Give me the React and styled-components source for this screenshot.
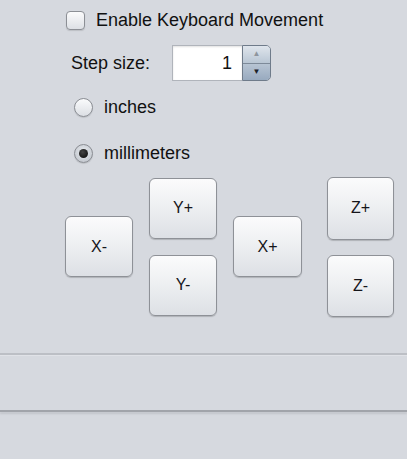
import React from 'react'
import styled, { createGlobalStyle } from 'styled-components'

const Global = createGlobalStyle`
  html, body {
    margin: 0;
    padding: 0;
    background: #d6d9df;
  }
  body {
    font-family: "Liberation Sans", Arial, sans-serif;
    font-size: 18px;
    color: #111;
  }
`

const Page = styled.div`
  width: 407px;
  height: 459px;
  display: flex;
  flex-direction: column;
  background: #d6d9df;
  overflow: hidden;
`

const Panel = styled.div`
  display: flex;
  flex-direction: column;
  padding: 10px 0 0 66px;
`

const Row = styled.label`
  display: flex;
  align-items: center;
  height: ${(p) => p.h ?? 20}px;
  margin-top: ${(p) => p.mt ?? 0}px;
  padding-left: ${(p) => p.pl ?? 0}px;
  gap: ${(p) => p.gap ?? 10}px;
  line-height: 1;
  white-space: nowrap;
`

const CheckBox = styled.span`
  width: 19px;
  height: 19px;
  box-sizing: border-box;
  border: 1px solid #8c8f95;
  border-radius: 4px;
  background: linear-gradient(#fbfbfc, #dde0e5);
  box-shadow: 0 1px 1px rgba(0, 0, 0, 0.12);
`

const Label = styled.span`
  width: ${(p) => (p.w ? p.w + 'px' : 'auto')};
  flex-shrink: 0;
`

const Spinner = styled.div`
  display: flex;
  height: 36px;
`

const Field = styled.div`
  width: 70px;
  box-sizing: border-box;
  border: 1px solid #b0b4bb;
  border-right: none;
  background: #fff;
  box-shadow: inset 0 1px 2px rgba(0, 0, 0, 0.12);
  display: flex;
  align-items: center;
  justify-content: flex-end;
  padding-right: 10px;
  font-size: 18px;
`

const Arrows = styled.div`
  width: 29px;
  display: flex;
  flex-direction: column;
  box-sizing: border-box;
  border: 1px solid #6f7b8a;
  border-radius: 0 5px 5px 0;
  overflow: hidden;
`

const ArrowBtn = styled.div`
  flex: 1;
  display: flex;
  align-items: center;
  justify-content: center;
  background: ${(p) =>
    p.up
      ? 'linear-gradient(#dfe5ec, #b9c6d4)'
      : 'linear-gradient(#b7c4d3, #98aabf)'};
  border-top: ${(p) => (p.up ? 'none' : '1px solid #7d8a99')};
  color: ${(p) => (p.up ? '#8e959d' : '#1d2229')};
  font-size: 8px;
`

const Radio = styled.span`
  position: relative;
  width: 19px;
  height: 19px;
  box-sizing: border-box;
  border-radius: 50%;
  border: 1px solid #8a8d93;
  background: ${(p) =>
    p.checked
      ? 'radial-gradient(circle at 50% 40%, #e9ecf0, #b9bec6)'
      : 'linear-gradient(#fafbfc, #dcdfe4)'};
  box-shadow: 0 1px 1px rgba(0, 0, 0, 0.12);
  &::after {
    content: '';
    display: ${(p) => (p.checked ? 'block' : 'none')};
    position: absolute;
    left: 4px;
    top: 4px;
    width: 9px;
    height: 9px;
    border-radius: 50%;
    background: radial-gradient(circle at 40% 35%, #444, #050505);
  }
`

const Pad = styled.div`
  display: flex;
  align-items: center;
  margin-top: 14px;
  height: 139px;
`

const Column = styled.div`
  display: flex;
  flex-direction: column;
  gap: ${(p) => p.gap ?? 16}px;
  margin-left: ${(p) => p.ml ?? 0}px;
`

const JogButton = styled.button`
  width: ${(p) => p.w ?? 68}px;
  height: ${(p) => p.h ?? 61}px;
  margin-left: ${(p) => p.ml ?? 0}px;
  box-sizing: border-box;
  border: 1px solid #8e9197;
  border-radius: 6px;
  background: linear-gradient(#fbfbfc 0%, #eef0f2 45%, #dde0e5 100%);
  box-shadow: 0 1px 1px rgba(0, 0, 0, 0.18);
  font-family: "Liberation Sans", Arial, sans-serif;
  font-size: 16px;
  color: #15151a;
  padding: 0;
`

const Divider = styled.div`
  height: 2px;
  margin-top: ${(p) => p.mt ?? 0}px;
  background: ${(p) => (p.dark ? '#a1a4aa' : '#bcbfc5')};
  box-shadow: ${(p) =>
    p.dark ? '0 2px 2px rgba(0,0,0,0.1)' : '0 1px 0 rgba(255,255,255,0.25)'};
`

export default function App() {
  return (
    <Page>
      <Global />
      <Panel>
        <Row gap={11}>
          <CheckBox />
          <span>Enable Keyboard Movement</span>
        </Row>
        <Row h={36} mt={15} pl={5} gap={0}>
          <Label w={101}>Step size:</Label>
          <Spinner>
            <Field>1</Field>
            <Arrows>
              <ArrowBtn up>▲</ArrowBtn>
              <ArrowBtn>▼</ArrowBtn>
            </Arrows>
          </Spinner>
        </Row>
        <Row mt={16} pl={8} gap={11}>
          <Radio />
          <span>inches</span>
        </Row>
        <Row mt={26} pl={8} gap={11}>
          <Radio checked />
          <span>millimeters</span>
        </Row>
        <Pad>
          <JogButton ml={-1}>X-</JogButton>
          <Column ml={16}>
            <JogButton>Y+</JogButton>
            <JogButton>Y-</JogButton>
          </Column>
          <JogButton ml={16} w={69}>X+</JogButton>
          <Column ml={25} gap={15}>
            <JogButton w={67} h={63}>Z+</JogButton>
            <JogButton w={67} h={62}>Z-</JogButton>
          </Column>
        </Pad>
      </Panel>
      <Divider mt={37} />
      <Divider dark mt={55} />
    </Page>
  )
}
